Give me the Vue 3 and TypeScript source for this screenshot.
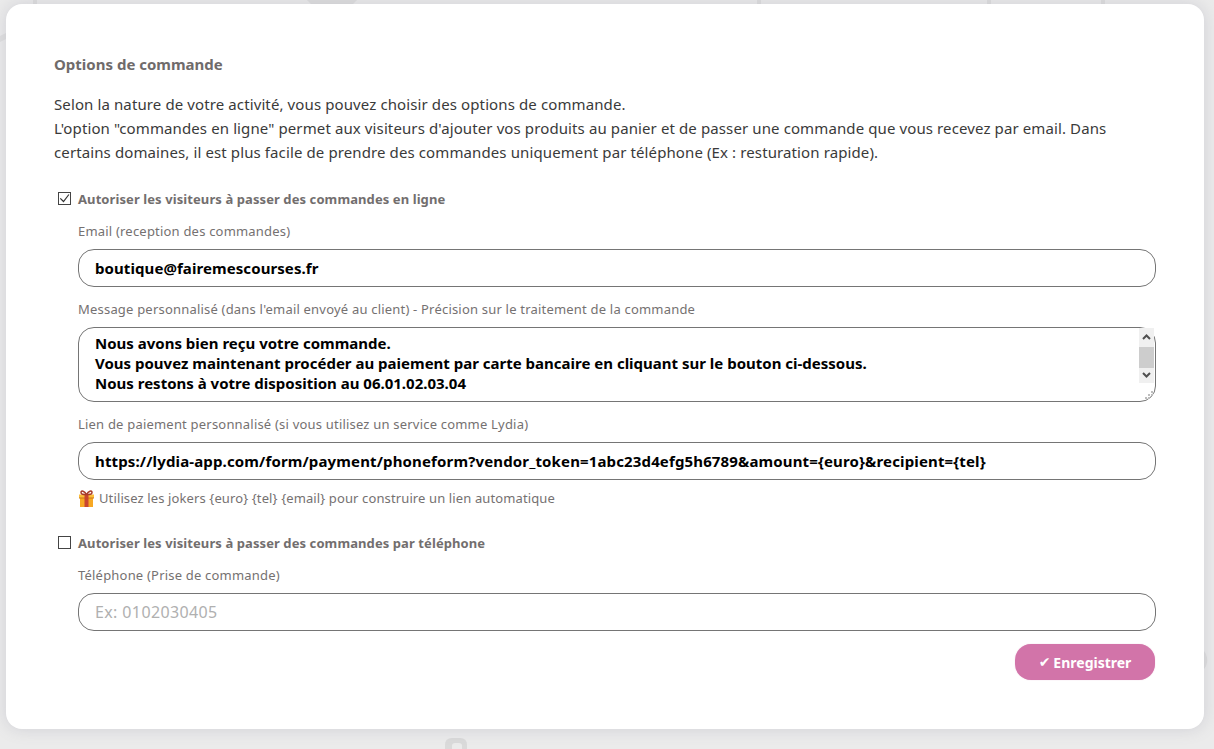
<script setup lang="ts">
import { ref } from 'vue'

const email = ref('boutique@fairemescourses.fr')
const message = ref(
  'Nous avons bien reçu votre commande.\nVous pouvez maintenant procéder au paiement par carte bancaire en cliquant sur le bouton ci-dessous.\nNous restons à votre disposition au 06.01.02.03.04\n'
)
const link = ref('https://lydia-app.com/form/payment/phoneform?vendor_token=1abc23d4efg5h6789&amount={euro}&recipient={tel}')
const phone = ref('')
const online = ref(true)
const byPhone = ref(false)
</script>

<template>
  <div class="page">
    <svg class="backdrop" width="1214" height="749" viewBox="0 0 1214 749" fill="none">
      <path d="M307 0h50l-4 4h-42z" fill="#dedede" />
      <path d="M0 36l6-3v6l-6 3z" fill="#e0e0e0" />
      <path d="M33 0h4v4h-4zM757 0h4v4h-4zM987 0h4v4h-4zM1101 0h4v4h-4z" fill="#dedede" />
      <path d="M1204 651q4 5 3 12q-1 4-3 6z" fill="#dedede" />
      <path d="M445 749v-4q0-7 7-7h8q7 0 7 7v4h-5v-3q0-3-3-3h-4q-3 0-3 3v3z" fill="#dadada" />
    </svg>
    <section class="card">
      <h2 class="title">Options de commande</h2>
      <p class="intro">
        Selon la nature de votre activité, vous pouvez choisir des options de commande.<br />
        L'option "commandes en ligne" permet aux visiteurs d'ajouter vos produits au panier et de passer une commande que vous recevez par email. Dans certains domaines, il est plus facile de prendre des commandes uniquement par téléphone (Ex : resturation rapide).
      </p>

      <label class="check-row">
        <input v-model="online" class="check" type="checkbox" />
        <svg class="tick" width="13" height="13" viewBox="0 0 13 13" fill="none">
          <path d="M2.300 6.300l3.200 3.200 5.400-7" stroke="#333" stroke-width="1.200" />
        </svg>
        <span>Autoriser les visiteurs à passer des commandes en ligne</span>
      </label>
      <div class="group">
        <label class="field-label">Email (reception des commandes)</label>
        <input v-model="email" class="control" type="text" />
        <label class="field-label">Message personnalisé (dans l'email envoyé au client) - Précision sur le traitement de la commande</label>
        <div class="area-wrap">
          <textarea v-model="message" class="control area" rows="3"></textarea>
          <div class="scroll">
            <svg class="arrow" width="15" height="19" viewBox="0 0 15 19" fill="none">
              <path d="M4 11l3.500-3.500L11 11" stroke="#505050" stroke-width="2" />
            </svg>
            <div class="thumb"></div>
            <svg class="arrow low" width="15" height="16" viewBox="0 0 15 16" fill="none">
              <path d="M4 5l3.500 3.500L11 5" stroke="#505050" stroke-width="2" />
            </svg>
          </div>
          <svg class="grip" width="10" height="10" viewBox="0 0 10 10">
            <path d="M7 0h2v2H7zM4 3h2v2H4zM7 3h2v2H7zM1 6h2v2H1zM4 6h2v2H4z" fill="#bdbdbd" />
          </svg>
        </div>
        <label class="field-label">Lien de paiement personnalisé (si vous utilisez un service comme Lydia)</label>
        <input v-model="link" class="control link" type="text" />
        <p class="hint">
          <svg width="17" height="17" viewBox="0 0 17 17">
            <path d="M2 7h13v10H2z" fill="#f7a823" />
            <path d="M1 4.500h15V8H1z" fill="#fdbf3a" />
            <path d="M1 7.500h15V8.500H1z" fill="#c9741b" />
            <path d="M6.500 4.500h4V17h-4z" fill="#c8452f" />
            <path d="M8.500 4.500C6.500 1 3 0 3 2.500s3.500 2 5.500 2zm0 0c2-3.500 5.500-4.500 5.500-2s-3.500 2-5.500 2z" fill="none" stroke="#a83c2a" stroke-width="1.500" />
          </svg>
          <span>Utilisez les jokers {euro} {tel} {email} pour construire un lien automatique</span>
        </p>
      </div>

      <label class="check-row second">
        <input v-model="byPhone" class="check" type="checkbox" />
        <span>Autoriser les visiteurs à passer des commandes par téléphone</span>
      </label>
      <div class="group">
        <label class="field-label">Téléphone (Prise de commande)</label>
        <input v-model="phone" class="control" type="text" placeholder="Ex: 0102030405" />
      </div>

      <div class="actions">
        <button class="save" type="button"><span class="mark">✔</span>Enregistrer</button>
      </div>
    </section>
  </div>
</template>

<style>
html,
body {
  margin: 0;
  background: #ebebeb;
}
</style>

<style scoped>
.page {
  position: relative;
  box-sizing: border-box;
  width: 1214px;
  height: 749px;
  padding: 4px 10px 0 6px;
  overflow: hidden;
  background: #ebebeb;
  font-family: "Noto Sans", "Liberation Sans", sans-serif;
  color: #333;
}
.backdrop {
  position: absolute;
  inset: 0;
}
.card {
  position: relative;
  box-sizing: border-box;
  height: 725px;
  padding: 50px 48px 0;
  background: #fff;
  border-radius: 16px;
  box-shadow: 0 0 16px rgba(110, 110, 135, 0.22);
}
.title {
  margin: 0;
  font-size: 15px;
  line-height: 20px;
  font-weight: 700;
  color: #6f6b6b;
}
.intro {
  margin: 18px 0 0;
  font-size: 15px;
  line-height: 24px;
  letter-spacing: 0.11px;
  color: #3a3a3a;
}
.check-row {
  position: relative;
  display: flex;
  align-items: center;
  height: 19px;
  margin: 25px 0 1px 4px;
  font-size: 13px;
  letter-spacing: 0.09px;
  font-weight: 700;
  color: #726e6e;
}
.second {
  margin-top: 26px;
}
.check {
  appearance: none;
  box-sizing: border-box;
  width: 13px;
  height: 13px;
  margin: 0 7px 0 0;
  border: 1px solid #444;
  background: #fff;
}
.tick {
  position: absolute;
  left: 0;
  top: 3px;
}
.group {
  display: flex;
  flex-direction: column;
  margin-left: 24px;
}
.field-label {
  margin-top: 13px;
  font-size: 13px;
  line-height: 18px;
  letter-spacing: 0.2px;
  color: #757171;
}
.control {
  box-sizing: border-box;
  width: 1078px;
  height: 38px;
  margin-top: 9px;
  padding: 0 16px;
  border: 1px solid #757575;
  border-radius: 16px;
  outline: none;
  background: #fff;
  font-family: inherit;
  font-size: 15px;
  letter-spacing: 0.08px;
  font-weight: 700;
  color: #000;
}
.link {
  letter-spacing: 0.14px;
}
.control::placeholder {
  font-size: 16px;
  letter-spacing: 0.38px;
  font-weight: 400;
  color: #b0b0b0;
}
.area-wrap {
  position: relative;
  margin-top: 9px;
}
.area {
  display: block;
  height: 75px;
  margin-top: 0;
  padding: 5px 20px 5px 16px;
  line-height: 20px;
  letter-spacing: 0;
  overflow-y: hidden;
  resize: none;
}
.scroll {
  position: absolute;
  top: 1px;
  right: 2px;
  display: flex;
  flex-direction: column;
  width: 15px;
  height: 55px;
  background: #f0f0f0;
}
.arrow {
  display: block;
  flex: none;
}
.low {
  margin-top: auto;
}
.thumb {
  flex: none;
  height: 21px;
  background: #cdcdcd;
}
.grip {
  position: absolute;
  right: 2px;
  bottom: 1px;
}
.hint {
  display: flex;
  align-items: center;
  gap: 4px;
  margin: 9px 0 0;
  font-size: 13px;
  line-height: 18px;
  letter-spacing: 0.12px;
  color: #757171;
}
.actions {
  display: flex;
  justify-content: flex-end;
  margin: 13px 1px 0 0;
}
.save {
  display: flex;
  align-items: center;
  justify-content: center;
  width: 140px;
  height: 36px;
  padding: 0;
  border: 0;
  border-radius: 16px;
  background: #d274a9;
  box-shadow: 0 0 1px rgba(210, 116, 169, 0.5);
  font-family: inherit;
  font-size: 14px;
  font-weight: 700;
  color: #fff;
}
.mark {
  margin-right: 3px;
  font-family: "DejaVu Sans", sans-serif;
  font-size: 14px;
  font-weight: 400;
}
</style>
